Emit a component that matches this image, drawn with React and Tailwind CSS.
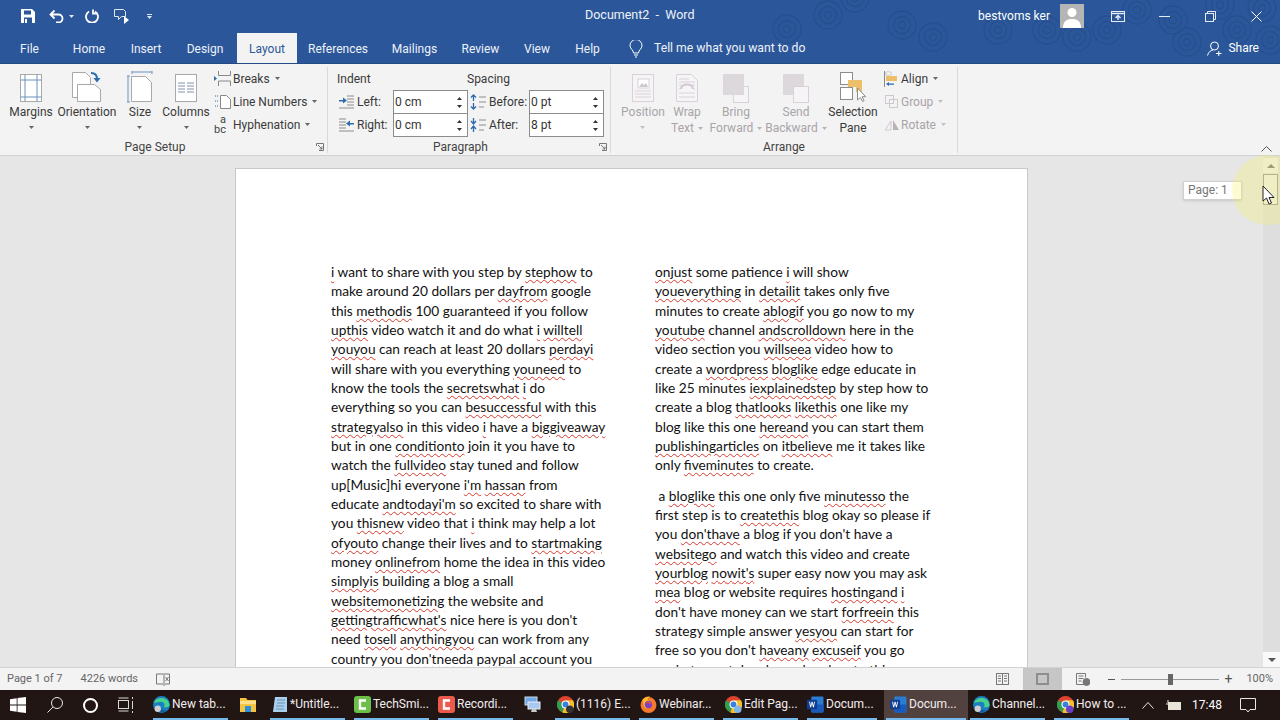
// App.jsx
import React from 'react';

const col1 = [
  '{i} want to share with you step by {stephow} to',
  'make around 20 dollars per {dayfrom} google',
  'this {methodis} 100 guaranteed if you follow',
  '{upthis} video watch it and do what {i} {willtell}',
  '{youyou} can reach at least 20 dollars {perdayi}',
  'will share with you everything {youneed} to',
  'know the tools the {secretswhat} {i} do',
  'everything so you can {besuccessful} with this',
  '{strategyalso} in this video {i} have a {biggiveaway}',
  'but in one {conditionto} join it you have to',
  'watch the {fullvideo} stay tuned and follow',
  'up[Music]hi everyone {i\'m} {hassan} from',
  'educate {andtodayi\'m} so excited to share with',
  'you {thisnew} video that {i} think may help a lot',
  '{ofyouto} change their lives and to {startmaking}',
  'money {onlinefrom} home the idea in this video',
  '{simplyis} building a blog a small',
  '{websitemonetizing} the website and',
  '{gettingtrafficwhat\'s} nice here is you don\'t',
  'need {tosell} {anythingyou} can work from any',
  'country you {don\'tneeda} {paypal} account you',
];

const col2a = [
  '{onjust} some patience {i} will show',
  '{youeverything} in {detailit} takes only five',
  'minutes to create {ablogif} you go now to my',
  '{youtube} channel {andscrolldown} here in the',
  'video section you {willseea} video how to',
  'create a {wordpress} {bloglike} edge educate in',
  'like 25 minutes {iexplainedstep} by step how to',
  'create a blog {thatlooks} {likethis} one like my',
  'blog like this one {hereand} you can start them',
  '{publishingarticles} on {itbelieve} me it takes like',
  'only {fiveminutes} to create.',
];

const col2b = [
  '\u00a0a {bloglike} this one only five {minutesso} the',
  'first step is to {createthis} blog okay so please if',
  'you {don\'thave} a blog if you don\'t have a',
  '{websitego} and watch this video and create',
  '{yourblog} {nowit\'s} super easy now you may ask',
  '{mea} blog or website requires {hostingand} {i}',
  'don\'t have money can we start {forfreein} this',
  'strategy simple answer {yesyou} can start for',
  'free so you don\'t {haveany} {excuseif} you go',
  'again to youtube channel and go to this',
];

const DocLine = ({ text }) => {
  const parts = text.split(/(\{[^}]+\})/);
  return (
    <div className="whitespace-pre">
      {parts.map((p, i) =>
        p.startsWith('{') ? (
          <span key={i} className="underline decoration-wavy decoration-[#d8382c] decoration-1 underline-offset-[2px]">
            {p.slice(1, -1)}
          </span>
        ) : (
          <span key={i}>{p}</span>
        )
      )}
    </div>
  );
};

const Caret = ({ color = '#555', className = '' }) => (
  <svg width="5" height="3" viewBox="0 0 5 3" className={className}>
    <path d="M0 0h5L2.5 3z" fill={color} />
  </svg>
);

const MarginsIcon = () => (
  <svg width="24" height="30" viewBox="0 0 24 30" fill="none">
    <rect x="1.5" y="1.5" width="21" height="27" fill="#fff" stroke="#a9a9a9" />
    <path d="M6 1.5v27M18 1.5v27M1.5 7h21M1.5 24h21" stroke="#6d93be" />
  </svg>
);

const OrientationIcon = () => (
  <svg width="32" height="32" viewBox="0 0 32 32" fill="none">
    <path d="M1.5 1.5h13l5 5v20h-18z" fill="#fff" stroke="#a9a9a9" />
    <path d="M6.5 13.5h17l6 5v12h-23z" fill="#fff" stroke="#a9a9a9" />
    <path d="M20 2c4 0 6 2 6 6" stroke="#2b6cb0" strokeWidth="2" />
    <path d="M22.5 7h7L26 11.5z" fill="#2b6cb0" />
  </svg>
);

const SizeIcon = () => (
  <svg width="26" height="32" viewBox="0 0 26 32" fill="none">
    <path d="M5 1h20M5 0v3M25 0v3M1 5v26M0 5h3M0 31h3" stroke="#6d93be" />
    <path d="M4.5 5.5h14l6 6v19h-20z" fill="#fff" stroke="#a9a9a9" />
  </svg>
);

const ColumnsIcon = () => (
  <svg width="24" height="30" viewBox="0 0 24 30" fill="none">
    <rect x="1.5" y="1.5" width="21" height="27" fill="#fff" stroke="#a9a9a9" />
    <path d="M4 10h7M13 10h7M4 13h7M13 13h7M4 16h7M13 16h7M4 19h7M13 19h7" stroke="#7f93aa" />
  </svg>
);

const BreaksIcon = () => (
  <svg width="17" height="15" viewBox="0 0 17 15" fill="none">
    <path d="M4.5 0v4.5h12V0M4.5 15v-5h12v5" stroke="#888" />
    <path d="M0 5l3 2.5L0 10z" fill="#2b6cb0" />
  </svg>
);

const LineNumbersIcon = () => (
  <svg width="17" height="15" viewBox="0 0 17 15" fill="none">
    <path d="M6.5 1.5h6l4 4v9h-10z" fill="#fff" stroke="#888" />
    <path d="M1 2h3M1 7h3M1 12h3" stroke="#2b6cb0" strokeDasharray="1 1" />
  </svg>
);

const HyphenIcon = () => (
  <div className="w-[17px] h-[19px] text-[#444] text-[11px] leading-[10px]">
    <div className="pl-[6px]">a</div>
    <div>bc</div>
  </div>
);

const IndentIcon = ({ flip }) => (
  <svg width="15" height="15" viewBox="0 0 15 15" fill="none" className={flip ? '-scale-x-100' : ''}>
    <path d="M8 2h7M8 5h7M8 8h7M8 11h7M0 14h15" stroke="#8c8c8c" />
    <path d="M0 6h4V3.5L8 6.5 4 9.5V7.5H0z" fill="#2b6cb0" />
  </svg>
);

const SpacingIcon = ({ after }) => (
  <svg width="16" height="16" viewBox="0 0 16 16" fill="none">
    <path d="M9 3h7M9 8h7M9 13h5" stroke="#8c8c8c" />
    {after ? (
      <path d="M3.5 1v5M1 4l2.5 3L6 4M3.5 15v-5M1 12l2.5-3L6 12" stroke="#2b6cb0" strokeWidth="1.3" />
    ) : (
      <path d="M3.5 7V1M1 3.5L3.5 1 6 3.5M3.5 9v6M1 12.5L3.5 15 6 12.5" stroke="#2b6cb0" strokeWidth="1.3" />
    )}
  </svg>
);

const PositionIcon = () => (
  <svg width="24" height="30" viewBox="0 0 24 30" fill="none">
    <rect x="1.5" y="1.5" width="21" height="27" fill="#f7f4f7" stroke="#d8d2d8" />
    <rect x="7" y="6" width="11" height="9" fill="#fff" stroke="#d8d2d8" />
    <path d="M8 14l3-4 2 2 2-2 2 4z" fill="#cfc8cf" />
    <path d="M4 18h16M4 21h16M4 24h16" stroke="#d8d2d8" />
  </svg>
);

const WrapIcon = () => (
  <svg width="24" height="30" viewBox="0 0 24 30" fill="none">
    <path d="M1.5 1.5h15l6 6v21h-21z" fill="#f7f4f7" stroke="#d8d2d8" />
    <path d="M6 16c0-6 12-6 12 0" stroke="#cfc8cf" strokeWidth="2" />
    <path d="M4 6h10M4 9h16M4 12h3M17 12h3M4 16h1M19 16h1M4 20h16M4 24h16" stroke="#d8d2d8" />
  </svg>
);

const LayerIcon = ({ back }) => (
  <svg width="27" height="29" viewBox="0 0 27 29" fill="none">
    {back ? (
      <>
        <rect x="0" y="0" width="21" height="21" fill="#dcd8dc" />
        <rect x="10.5" y="12.5" width="15" height="16" fill="#f7f4f7" stroke="#d8d2d8" />
      </>
    ) : (
      <>
        <rect x="10.5" y="12.5" width="15" height="16" fill="#f7f4f7" stroke="#d8d2d8" />
        <rect x="0" y="0" width="21" height="21" fill="#dcd8dc" />
      </>
    )}
  </svg>
);

const SelectionIcon = () => (
  <svg width="28" height="32" viewBox="0 0 28 32" fill="none">
    <rect x="1.5" y="1.5" width="12" height="12" fill="#fff" stroke="#8c8c8c" />
    <rect x="1.5" y="16.5" width="12" height="12" fill="#fff" stroke="#8c8c8c" />
    <path d="M9 9h14v12h-6v-5H9z" fill="#eebf6b" />
    <path d="M18.5 17v12l3-2.5 2 4 1.6-.8-2-4h3.6z" fill="#fff" stroke="#8c8c8c" />
  </svg>
);

const AlignIcon = () => (
  <svg width="14" height="16" viewBox="0 0 14 16" fill="none">
    <path d="M.5 0v16" stroke="#888" />
    <path d="M2 1h5v3H2z" fill="#fff" stroke="#aaa" strokeWidth=".6" />
    <rect x="2" y="5" width="11" height="5" fill="#eebf6b" />
    <path d="M2 13l3-2v1.4h5v1.3H5V15z" fill="#2b6cb0" />
  </svg>
);

const GroupIcon = () => (
  <svg width="15" height="15" viewBox="0 0 15 15" fill="none" stroke="#cfc8cf">
    <rect x="1.5" y="1.5" width="8" height="8" />
    <rect x="5.5" y="5.5" width="8" height="8" />
  </svg>
);

const RotateIcon = () => (
  <svg width="16" height="13" viewBox="0 0 16 13">
    <path d="M1 12l6-9v9z" fill="none" stroke="#cfc8cf" />
    <path d="M9 2l6 10H9z" fill="#b8b2b8" />
  </svg>
);

const LargeButton = ({ icon, lines, width, disabled, caret = 'below' }) => (
  <div className={`flex flex-col items-center shrink-0 ${width} ${disabled ? 'text-[#a9a4a9]' : 'text-[#3a3a3a]'}`}>
    <div className="h-[35px] flex items-end justify-center">{icon}</div>
    <div className="mt-[1px] leading-[16px] text-center whitespace-nowrap">
      {lines.map((l, i) => (
        <div key={i} className="flex items-center justify-center gap-[4px]">
          {l}
          {caret === 'inline' && i === lines.length - 1 && <Caret color="#b8b2b8" />}
        </div>
      ))}
      {caret === 'below' && (
        <div className="h-[14px] flex items-center justify-center">
          <Caret color={disabled ? '#c4bfc4' : '#666'} />
        </div>
      )}
    </div>
  </div>
);

const SmallButton = ({ icon, label, disabled, iconWidth = 'w-[19px]' }) => (
  <div className={`h-[23px] flex items-center whitespace-nowrap ${disabled ? 'text-[#a9a4a9]' : 'text-[#3a3a3a]'}`}>
    <div className={`${iconWidth} shrink-0 flex items-center`}>{icon}</div>
    <span>{label}</span>
    <Caret className="ml-[5px]" color={disabled ? '#c4bfc4' : '#666'} />
  </div>
);

const Spinner = ({ value }) => (
  <div className="w-[75px] h-[24px] -mb-px border border-[#8c8c8c] bg-white flex items-center justify-between pl-[1px] pr-[5px] text-[#333]">
    <span>{value}</span>
    <div className="flex flex-col gap-[5px]">
      <Caret color="#333" className="rotate-180" />
      <Caret color="#333" />
    </div>
  </div>
);

const GroupFooter = ({ label, launcher }) => (
  <div className={`h-[12px] relative flex items-center justify-center text-[#444] ${launcher ? 'pr-[17px]' : ''}`}>
    {label}
    {launcher && (
      <svg width="8" height="8" viewBox="0 0 8 8" fill="none" stroke="#777" className="absolute right-[3px] top-[2px]">
        <path d="M.5 3V.5h7v7H3M2 2l4 4M6 3.500V6H3.500" />
      </svg>
    )}
  </div>
);

const swirls = [
  [787, 29], [828, 15], [855, -2], [902, 25], [933, 37], [998, 30], [1047, 30], [1077, 37],
  [1107, 30], [1137, 10], [1173, 20], [1187, 42], [1220, 5], [1237, 30], [1270, 40], [1262, 8],
];

const Swirls = () => (
  <svg width="1280" height="63" viewBox="0 0 1280 63" fill="none" stroke="#24508f" strokeWidth="1.3" className="absolute left-0 top-0">
    {swirls.map(([x, y], i) => (
      <g key={i} transform={`translate(${x} ${y})`}>
        <circle r="3.500" />
        <circle r="8.500" />
        <circle r="14" />
      </g>
    ))}
  </svg>
);

const ChromeIcon = ({ badge }) => (
  <svg width="17" height="17" viewBox="0 0 32 32">
    <circle cx="16" cy="16" r="16" fill="#e0432f" />
    <path d="M16 16L2 8a16 16 0 0 0 8 22.9z" fill="#2f9e4f" />
    <path d="M16 16l-6 14.9A16 16 0 0 0 30 8H16z" fill="#f6c02c" />
    <circle cx="16" cy="16" r="7.5" fill="#fff" />
    <circle cx="16" cy="16" r="5.5" fill="#3a7fe0" />
    {badge && <circle cx="24" cy="25" r="7" fill={badge} />}
  </svg>
);

const EdgeIcon = () => (
  <svg width="17" height="17" viewBox="0 0 32 32">
    <circle cx="16" cy="16" r="16" fill="#1c7ec2" />
    <path d="M2 12C5 2 28-2 31 17c.5 4-7 5-11 4 4-4 1-10-5-10S4 14 2 12z" fill="#46d28a" />
    <path d="M2 20c2 8 14 15 24 7-6 1-11-1-12-6z" fill="#0f5c9c" />
    <circle cx="9" cy="24" r="6" fill="#cfcfcf" />
  </svg>
);

const FirefoxIcon = () => (
  <svg width="17" height="17" viewBox="0 0 32 32">
    <circle cx="16" cy="17" r="15" fill="#f4792b" />
    <path d="M4 8c3-5 9-8 15-7-3 2-5 5-5 7 5-1 9 2 9 7s-4 8-9 8-8-4-7-9z" fill="#ffbb2e" />
    <circle cx="16" cy="16" r="7" fill="#7b3fc8" />
    <path d="M10 12c4-3 11-2 12 4-3-3-8-3-12-4z" fill="#f4502b" />
  </svg>
);

const WordIcon = () => (
  <svg width="17" height="17" viewBox="0 0 32 32">
    <rect x="8" y="1" width="23" height="30" rx="2" fill="#2b7cd3" />
    <rect x="8" y="16" width="23" height="15" rx="2" fill="#185abd" />
    <rect x="0" y="7" width="19" height="18" rx="2" fill="#103f91" />
    <path d="M4 11l2 10h1.8L9.5 14l1.7 7H13l2-10h-1.7l-1.2 7-1.6-7H8.7L7 18l-1.2-7z" fill="#fff" />
  </svg>
);

const CamtasiaIcon = ({ color }) => (
  <svg width="17" height="17" viewBox="0 0 17 17">
    <rect width="17" height="17" rx="3" fill={color} />
    <path d="M12 4.5H6v8h6" fill="none" stroke="#fff" strokeWidth="2.4" />
  </svg>
);

const FolderIcon = () => (
  <svg width="16" height="15" viewBox="0 0 16 15">
    <path d="M0 1h6l1.5 2H16v12H0z" fill="#f5c542" />
    <rect y="4" width="16" height="3" fill="#ffe08a" />
    <rect x="5" y="9" width="6" height="6" fill="#2f8fd8" />
  </svg>
);

const NotepadIcon = () => (
  <svg width="16" height="17" viewBox="0 0 16 17">
    <path d="M3 1h12v15H1z" fill="#a9d0ee" />
    <path d="M5 4h8M5 7h8M4 10h8M4 13h8" stroke="#6c8fae" />
  </svg>
);

const NetworkIcon = () => (
  <svg width="17" height="17" viewBox="0 0 17 17">
    <rect x="1" y="1" width="12" height="8" fill="#6fa8e8" stroke="#cfd8e8" />
    <rect x="4" y="6" width="12" height="7" fill="#a8c8f0" stroke="#e8eef8" />
    <path d="M7 16h6l-1-3H8z" fill="#c8c8c8" />
  </svg>
);

const tasks = [
  { icon: <EdgeIcon />, label: 'New tab...', w: 'w-[84px]', pl: 'pl-[2px]' },
  { icon: <FolderIcon />, w: 'w-[33px]', pl: 'pl-[5px]' },
  { icon: <NotepadIcon />, label: '*Untitle...', w: 'w-[84px]', pl: 'pl-[4px]' },
  { icon: <CamtasiaIcon color="#6cc04a" />, label: 'TechSmi...', w: 'w-[84px]', pl: 'pl-[2px]' },
  { icon: <CamtasiaIcon color="#ec5a4c" />, label: 'Recordi...', w: 'w-[84px]', pl: 'pl-[2px]' },
  { icon: <NetworkIcon />, w: 'w-[33px]', pl: 'pl-[4px]' },
  { icon: <ChromeIcon badge="#333" />, label: '(1116) E...', w: 'w-[84px]', pl: 'pl-[4px]' },
  { icon: <FirefoxIcon />, label: 'Webinar...', w: 'w-[84px]', pl: 'pl-[3px]' },
  { icon: <ChromeIcon badge="#7fb8e8" />, label: 'Edit Pag...', w: 'w-[84px]', pl: 'pl-[4px]' },
  { icon: <WordIcon />, label: 'Docum...', w: 'w-[79px]', pl: 'pl-[2px]' },
  { icon: <WordIcon />, label: 'Docum...', w: 'w-[84px]', pl: 'pl-[6px]', active: true },
  { icon: <EdgeIcon />, label: 'Channel...', w: 'w-[84px]', pl: 'pl-[5px]' },
  { icon: <ChromeIcon badge="#6a3fc8" />, label: 'How to ...', w: 'w-[84px]', pl: 'pl-[5px]' },
];

const TaskItem = ({ t }) => (
  <div className={`${t.w} shrink-0 h-full flex flex-col ${t.active ? 'bg-[#52423f]' : ''}`}>
    <div className={`flex-1 flex items-center gap-[2px] ${t.pl} text-[12px] text-[#f2eeee] whitespace-nowrap`}>
      {t.icon}
      {t.label && <span>{t.label}</span>}
    </div>
    <div className={`h-[2px] ml-[2px] ${t.active ? 'mr-[2px]' : 'mr-[7px]'} ${t.label ? 'bg-[#76b9ed]' : ''}`} />
  </div>
);

const tabs = [
  ['File', 'w-[59px]'],
  ['Home', 'w-[60px]'],
  ['Insert', 'w-[54px]'],
  ['Design', 'w-[64px]'],
  ['Layout', 'w-[60px]'],
  ['References', 'w-[82px]'],
  ['Mailings', 'w-[71px]'],
  ['Review', 'w-[61px]'],
  ['View', 'w-[52px]'],
  ['Help', 'w-[49px]'],
];

const App = () => {
  return (
    <div className="w-[1280px] h-[720px] overflow-hidden relative flex flex-col bg-[#e6e6e6] font-['Roboto',sans-serif] text-[12px]">
      {/* title bar + tabs */}
      <div className="h-[64px] shrink-0 bg-[#2b579a] text-white relative border-b border-[#234a85]">
        <Swirls />
        <div className="h-[32px] flex items-center relative">
          <div className="flex items-center pl-[21px]">
            <svg width="14" height="14" viewBox="0 0 14 14">
              <path d="M0 0h11l3 3v11H0z" fill="#fff" />
              <rect x="3" y="1.5" width="7" height="4" fill="#2b579a" />
              <rect x="3" y="8.5" width="8" height="5.5" fill="#2b579a" />
              <rect x="4" y="10" width="2" height="4" fill="#fff" />
            </svg>
            <svg width="16" height="14" viewBox="0 0 16 14" fill="none" stroke="#fff" strokeWidth="1.8" className="ml-[14px]">
              <path d="M1.5 5.5h8a4 4 0 0 1 0 8H7M5.5 1.5l-4 4 4 4" />
            </svg>
            <Caret color="#dfe7f3" className="ml-[4px]" />
            <svg width="14" height="14" viewBox="0 0 14 14" fill="none" stroke="#fff" strokeWidth="1.8" className="ml-[11px]">
              <path d="M4 2.5a6 6 0 1 0 6 0M8 .5v4h4" />
            </svg>
            <svg width="17" height="17" viewBox="0 0 17 17" fill="none" className="ml-[14px]">
              <path d="M1.5 1.5h9l2 2v5h-4l-3 3v-3h-4z" stroke="#dfe7f3" />
              <path d="M11 8v8l5-4z" fill="#fff" />
            </svg>
            <div className="ml-[17px] flex flex-col items-center gap-[1px]">
              <div className="w-[5px] h-px bg-[#dfe7f3]" />
              <Caret color="#dfe7f3" />
            </div>
          </div>
          <div className="absolute left-[585px] top-[6px] text-[12.5px] text-[#eef2f8] whitespace-pre">Document2  -  Word</div>
          <div className="ml-auto flex items-center">
            <span className="text-[12px] whitespace-nowrap">bestvoms ker</span>
            <div className="w-[24px] h-[24px] ml-[10px] bg-[#b5b5b5] overflow-hidden">
              <svg width="24" height="24" viewBox="0 0 24 24">
                <circle cx="12" cy="8.5" r="4.5" fill="#fff" />
                <path d="M3 24c0-7 4-9 9-9s9 2 9 9z" fill="#fff" />
              </svg>
            </div>
            <svg width="14" height="11" viewBox="0 0 14 11" fill="none" stroke="#e6ecf5" className="ml-[27px]">
              <rect x=".5" y=".5" width="13" height="10" />
              <path d="M.5 2.5h13" strokeWidth="1.4" />
              <path d="M7 9V4.5M4.5 7L7 4.5 9.5 7" strokeWidth="1.4" />
            </svg>
            <div className="w-[11px] h-px bg-[#e6ecf5] ml-[34px]" />
            <svg width="11" height="11" viewBox="0 0 11 11" fill="none" stroke="#e6ecf5" className="ml-[35px]">
              <rect x=".5" y="2.5" width="8" height="8" />
              <path d="M2.5 2.5v-2h8v8h-2" />
            </svg>
            <svg width="11" height="11" viewBox="0 0 11 11" fill="none" stroke="#fff" className="ml-[35px] mr-[18px]">
              <path d="M.5.5l10 10M10.5.5l-10 10" />
            </svg>
          </div>
        </div>
        <div className="h-[31px] flex items-end relative">
          {tabs.map(([name, w]) =>
            name === 'Layout' ? (
              <div key={name} className={`${w} h-[30px] pt-[1px] bg-[#f3f3f3] text-[#2b579a] flex items-center justify-center`}>
                {name}
              </div>
            ) : (
              <div key={name} className={`${w} h-[30px] pt-[1px] text-[#eef2f8] flex items-center justify-center`}>
                {name}
              </div>
            )
          )}
          <div className="h-[30px] pt-[1px] flex items-center text-[#eef2f8] ml-[17px]">
            <svg width="14" height="18" viewBox="0 0 14 18" fill="none" stroke="#fff">
              <path d="M4.5 13c0-3-3.5-4-3.5-7.5a6 6 0 0 1 12 0C13 9 9.500 10 9.500 13zM5 15h4M6 17h2" />
            </svg>
            <span className="ml-[11px] text-[12.2px]">Tell me what you want to do</span>
          </div>
          <div className="ml-auto h-[30px] flex items-center mr-[21px]">
            <svg width="15" height="15" viewBox="0 0 15 15" fill="none" stroke="#fff">
              <circle cx="7.500" cy="5" r="4" />
              <path d="M.5 14.500C1.500 11 3.500 9.500 6 9M9 12.500h5.500M11.750 10v5" />
            </svg>
            <span className="ml-[6px]">Share</span>
          </div>
        </div>
      </div>

      {/* ribbon */}
      <div className="h-[92px] shrink-0 bg-[#f3f3f3] border-b border-[#d2d2d2] flex relative">
        <div className="w-[328px] shrink-0 flex flex-col border-r border-[#d9d9d9] mt-[3px] mb-[2px]">
          <div className="h-[74px] flex pl-[6px] pt-[1px]">
            <LargeButton icon={<MarginsIcon />} lines={['Margins']} width="w-[50px]" />
            <LargeButton icon={<OrientationIcon />} lines={['Orientation']} width="w-[62px]" />
            <LargeButton icon={<SizeIcon />} lines={['Size']} width="w-[44px]" />
            <LargeButton icon={<ColumnsIcon />} lines={['Columns']} width="w-[48px]" />
            <div className="pl-[4px] -mt-px">
              <SmallButton icon={<BreaksIcon />} label="Breaks" />
              <SmallButton icon={<LineNumbersIcon />} label="Line Numbers" />
              <SmallButton icon={<HyphenIcon />} label="Hyphenation" />
            </div>
          </div>
          <GroupFooter label="Page Setup" launcher />
        </div>

        <div className="w-[283px] shrink-0 flex flex-col border-r border-[#d9d9d9] mt-[3px] mb-[2px] text-[#3a3a3a]">
          <div className="h-[74px]">
            <div className="flex h-[19px] pl-[9px] items-center mt-[2px]">
              <span className="w-[130px]">Indent</span>
              <span>Spacing</span>
            </div>
            <div className="flex flex-col mt-[2px]">
              <div className="flex items-center pl-[11px]">
                <IndentIcon />
                <span className="w-[39px] pl-[3px]">Left:</span>
                <Spinner value="0 cm" />
                <div className="w-[2px]" />
                <SpacingIcon />
                <span className="w-[43px] pl-[3px]">Before:</span>
                <Spinner value="0 pt" />
              </div>
              <div className="flex items-center pl-[11px]">
                <IndentIcon flip />
                <span className="w-[39px] pl-[3px]">Right:</span>
                <Spinner value="0 cm" />
                <div className="w-[2px]" />
                <SpacingIcon after />
                <span className="w-[43px] pl-[3px]">After:</span>
                <Spinner value="8 pt" />
              </div>
            </div>
          </div>
          <GroupFooter label="Paragraph" launcher />
        </div>

        <div className="w-[347px] shrink-0 flex flex-col border-r border-[#d9d9d9] mt-[3px] mb-[2px]">
          <div className="h-[74px] flex pl-[7px] pt-[1px]">
            <LargeButton icon={<PositionIcon />} lines={['Position']} width="w-[50px]" disabled />
            <LargeButton icon={<WrapIcon />} lines={['Wrap', 'Text']} width="w-[38px]" disabled caret="inline" />
            <LargeButton icon={<LayerIcon />} lines={['Bring', 'Forward']} width="w-[60px]" disabled caret="inline" />
            <LargeButton icon={<LayerIcon back />} lines={['Send', 'Backward']} width="w-[60px]" disabled caret="inline" />
            <LargeButton icon={<SelectionIcon />} lines={['Selection', 'Pane']} width="w-[54px]" caret="none" />
            <div className="pl-[4px] -mt-px">
              <SmallButton icon={<AlignIcon />} label="Align" iconWidth="w-[17px]" />
              <SmallButton icon={<GroupIcon />} label="Group" disabled iconWidth="w-[17px]" />
              <SmallButton icon={<RotateIcon />} label="Rotate" disabled iconWidth="w-[17px]" />
            </div>
          </div>
          <GroupFooter label="Arrange" />
        </div>

        <svg width="11" height="6" viewBox="0 0 11 6" fill="none" stroke="#555" className="absolute right-[8px] bottom-[3px]">
          <path d="M.5 5.500l5-5 5 5" />
        </svg>
      </div>

      {/* document area */}
      <div className="flex-1 min-h-0 flex bg-[#e6e6e6]">
        <div className="flex-1 flex justify-center pt-[12px] overflow-hidden">
          <div className="w-[793px] h-[600px] shrink-0 bg-white border border-[#c8c8c8] pl-[95px] pt-[93px] flex font-['Lato',sans-serif] text-[13.7px] leading-[19.33px] text-[#111]">
            <div className="w-[324px] shrink-0">
              {col1.map((l, i) => <DocLine key={i} text={l} />)}
            </div>
            <div>
              {col2a.map((l, i) => <DocLine key={i} text={l} />)}
              <div className="h-[11px]" />
              {col2b.map((l, i) => <DocLine key={i} text={l} />)}
            </div>
          </div>
        </div>
        <div className="w-[17px] shrink-0 flex flex-col justify-between bg-[#dedede]">
          <div>
            <div className="h-[15px] mt-[2px] mr-[2px] bg-[#ededed] flex items-center justify-center">
              <svg width="8" height="4" viewBox="0 0 8 4"><path d="M0 4l4-4 4 4z" fill="#777" /></svg>
            </div>
            <div className="h-[31px] mt-[1px] mr-[2px] bg-[#ececec] border border-[#9a9a9a]" />
          </div>
          <div className="h-[15px] bg-[#f9f9f9] flex items-center justify-center">
            <svg width="8" height="4" viewBox="0 0 8 4"><path d="M0 0l4 4 4-4z" fill="#555" /></svg>
          </div>
        </div>
      </div>

      {/* status bar */}
      <div className="h-[23px] shrink-0 bg-[#f3f3f3] border-t border-[#d2d2d2] flex items-center text-[11px] text-[#666]">
        <span className="ml-[7px]">Page 1 of 7</span>
        <span className="ml-[18px]">4226 words</span>
        <svg width="14" height="13" viewBox="0 0 14 13" fill="none" stroke="#777" className="ml-[18px]">
          <path d="M7 1H.5v10H7M9 1h4.500v10H9" />
          <path d="M8 0v13M9.500 4l3 4M12.500 4l-3 4" />
        </svg>
        <div className="ml-auto flex items-center h-full">
          <svg width="13" height="12" viewBox="0 0 13 12" fill="none" stroke="#777">
            <rect x=".5" y=".5" width="12" height="11" />
            <path d="M6.500 .5v11M2 3h3M2 5.500h3M2 8h3M8 3h3M8 5.500h3M8 8h3" />
          </svg>
          <div className="w-[39px] h-full bg-[#c6c6c6] ml-[14px] flex items-center justify-center">
            <div className="w-[13px] h-[12px] border-2 border-[#8e8e8e] bg-[#c6c6c6]" />
          </div>
          <svg width="14" height="13" viewBox="0 0 14 13" fill="none" stroke="#777" className="ml-[14px]">
            <path d="M9 11.500H.5V.5h9v4M2.500 3h5M2.500 5.500h5M2.500 8h3" />
            <circle cx="10.500" cy="9" r="3.500" fill="#777" />
          </svg>
          <div className="w-[7px] h-px bg-[#555] ml-[18px]" />
          <div className="w-[98px] h-px bg-[#999] ml-[6px] relative">
            <div className="absolute left-[47px] -top-[5px] w-[5px] h-[11px] bg-[#666]" />
          </div>
          <span className="ml-[5px] text-[14px] leading-none text-[#555]">+</span>
          <span className="ml-[14px] mr-[7px]">100%</span>
        </div>
      </div>

      {/* taskbar */}
      <div className="h-[30px] shrink-0 bg-[#221615] flex items-center text-white">
        <div className="w-[36px] flex justify-center">
          <svg width="16" height="16" viewBox="0 0 16 16" fill="#fff">
            <path d="M0 2.200l6.700-1v6.400H0zM7.500 1l8.500-1v7.600H7.500zM0 8.400h6.700v6.400l-6.700-1zM7.500 8.400H16V16l-8.500-1.100z" />
          </svg>
        </div>
        <div className="w-[37px] flex justify-center">
          <svg width="16" height="16" viewBox="0 0 16 16" fill="none" stroke="#e8e8e8">
            <circle cx="10" cy="6" r="5.500" />
            <path d="M6 10l-5.500 5.500" />
          </svg>
        </div>
        <div className="w-[34px] flex justify-center">
          <div className="w-[15px] h-[15px] rounded-full border-[2.5px] border-white" />
        </div>
        <div className="w-[38px] flex justify-center">
          <svg width="16" height="16" viewBox="0 0 16 16" fill="none" stroke="#d8d8d8">
            <rect x=".5" y="3.500" width="10" height="8" />
            <path d="M.5 1h10M.5 14h10M14.500 0v2M14.500 4v8M14.500 14v2" />
          </svg>
        </div>
        <div className="w-[6px]" />
        <div className="flex h-full">
          {tasks.map((t, i) => <TaskItem key={i} t={t} />)}
        </div>
        <svg width="12" height="7" viewBox="0 0 12 7" fill="none" stroke="#e8e8e8" className="ml-[6px]">
          <path d="M.5 6.500l5.500-6 5.500 6" />
        </svg>
        <svg width="16" height="12" viewBox="0 0 16 12" className="ml-[11px]">
          <path d="M3 1v3M1 5h4" stroke="#eee" fill="none" />
          <rect x="3" y="3" width="13" height="8" fill="#e8e4d8" />
        </svg>
        <span className="ml-[11px] text-[12px]">17:48</span>
        <svg width="16" height="16" viewBox="0 0 16 16" fill="none" stroke="#e8e8e8" className="ml-[18px]">
          <path d="M.5 1.500h15v11H10l-2 2.500-2-2.500H.5z" />
        </svg>
      </div>

      {/* overlays: scroll tip, cursor highlight, pointer */}
      <div className="absolute left-[1183px] top-[181px] w-[59px] h-[19px] bg-white border border-[#d0d0d0] shadow-sm leading-[17px] pl-[4px] text-[#777]">Page: 1</div>
      <div className="absolute left-[1232px] top-[155px] w-[72px] h-[70px] rounded-full bg-[#f8f26a] opacity-30 pointer-events-none" />
      <svg width="14" height="20" viewBox="0 0 14 20" className="absolute left-[1262px] top-[185px]">
        <path d="M1 1v15l3.500-3 2.500 6 2.500-1-2.500-5.500H12z" fill="#fff" stroke="#222" />
      </svg>
    </div>
  );
};

export default App;
